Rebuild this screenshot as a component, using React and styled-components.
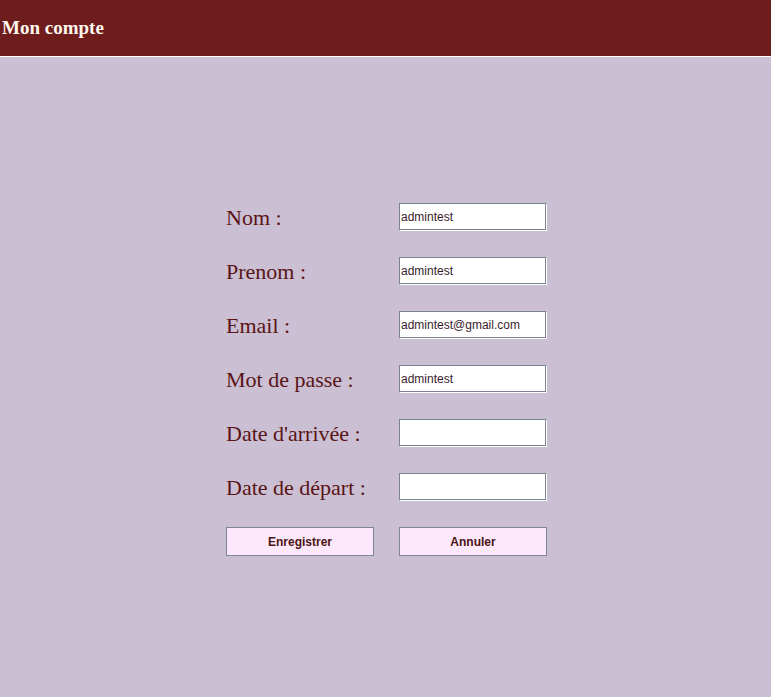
import React, { useState } from 'react'
import styled, { createGlobalStyle } from 'styled-components'

const GlobalStyle = createGlobalStyle`
  html, body {
    margin: 0;
    padding: 0;
    min-height: 100%;
    background-color: #cbbfd3;
  }
`

const fields = [
  { label: 'Nom :', name: 'nom', value: 'admintest' },
  { label: 'Prenom :', name: 'prenom', value: 'admintest' },
  { label: 'Email :', name: 'email', value: 'admintest@gmail.com' },
  { label: 'Mot de passe :', name: 'password', value: 'admintest' },
  { label: "Date d'arrivée :", name: 'arrivee', value: '' },
  { label: 'Date de départ :', name: 'depart', value: '' },
]

const App = () => {
  const [values, setValues] = useState(
    Object.fromEntries(fields.map((f) => [f.name, f.value]))
  )

  return (
    <Page>
      <GlobalStyle />
      <Header>
        <Title>Mon compte</Title>
      </Header>
      <Form onSubmit={(e) => e.preventDefault()}>
        {fields.map((f) => (
          <React.Fragment key={f.name}>
            <Label htmlFor={f.name}>{f.label}</Label>
            <InputField
              id={f.name}
              type="text"
              value={values[f.name]}
              onChange={(e) => setValues({ ...values, [f.name]: e.target.value })}
            />
          </React.Fragment>
        ))}
        <Button type="submit">Enregistrer</Button>
        <Button type="button">Annuler</Button>
      </Form>
    </Page>
  )
}

const Page = styled.div`
  min-height: 697px;
  background-color: #cbbfd3;
`

const Header = styled.header`
  height: 56px;
  background-color: #6e1c1c;
  border-bottom: 1px solid #ffffff;
  display: flex;
  align-items: center;
  padding-left: 2px;
`

const Title = styled.h1`
  margin: 0;
  font-family: "Liberation Serif", serif;
  font-size: 19px;
  font-weight: bold;
  color: #fff8ee;
`

const Form = styled.form`
  display: grid;
  grid-template-columns: 148px 148px;
  column-gap: 25px;
  row-gap: 26px;
  align-items: center;
  padding: 146px 0 0 226px;
`

const Label = styled.label`
  box-sizing: border-box;
  height: 28px;
  padding-top: 2px;
  font-family: "Liberation Serif", serif;
  font-size: 22px;
  line-height: 26px;
  color: #5a1414;
  white-space: nowrap;
`

const InputField = styled.input`
  box-sizing: border-box;
  width: 148px;
  height: 28px;
  margin: 0;
  padding: 1px 1px;
  border: 1px solid;
  border-color: #7a8290 #ffffff #ffffff #7a8290;
  box-shadow: inset -1px -1px 0 #7a8290;
  background-color: #ffffff;
  font-family: "Liberation Sans", sans-serif;
  font-size: 12px;
  color: #3a1c2c;
  outline: none;
`

const Button = styled.button`
  box-sizing: border-box;
  width: 148px;
  height: 29px;
  margin: 0;
  background-color: #fde8fb;
  border: 1px solid #7f8591;
  font-family: "Liberation Sans", sans-serif;
  font-size: 12px;
  font-weight: bold;
  color: #4a1414;
  cursor: pointer;
`

export default App
